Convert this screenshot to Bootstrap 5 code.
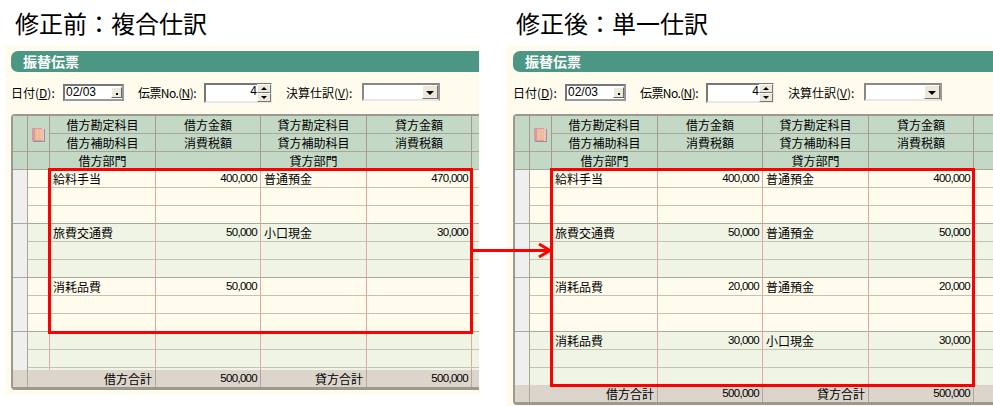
<!DOCTYPE html>
<html lang="ja">
<head>
<meta charset="utf-8">
<title>振替伝票</title>
<link href="https://cdn.jsdelivr.net/npm/bootstrap@5.3.0/dist/css/bootstrap.min.css" rel="stylesheet">
<style>
html,body{height:406px;overflow:hidden;background:#fff}
body{font-family:"Noto Sans CJK JP","Noto Sans",sans-serif;font-size:12px;color:#000;line-height:17px}
.stage{width:993px;height:406px}
.pane-a{width:501px;margin-left:5px}
.pane-b{width:487px}
.pane-title{height:45px;line-height:46px;font-size:24px;font-weight:400;margin:0;padding-left:10px}
.sheet{background:#fffcee;overflow:hidden;padding-top:6px}
.pane-a .sheet{width:474px;height:350px;padding-left:6px}
.pane-b .sheet{width:487px;height:361px;padding-left:7px}
.sheet-head{height:21px;width:600px;background:#4b9783;color:#fff;font-weight:700;font-size:14px;line-height:20px;padding-left:12px;border-radius:7px 0 0 7px}
.form-line{height:20px;margin-top:11px;width:470px;line-height:20px}
.f-label{width:52px}
.f-label2{width:58px;margin-left:14px;margin-right:8px;letter-spacing:-.6px}
.f-label3{width:68px;margin-left:14px;margin-right:8px}
.sunken{background:#fff;border:2px solid;font-family:"Liberation Sans",sans-serif;font-size:12px;line-height:12px}
.box-date{width:61px;height:17px;margin-top:1px;padding-left:1px;border-color:#777 #999 #999 #777;box-shadow:-1px -1px 0 #fbfaf6,3px 3px 0 #fbfaf6}
.box-num{width:68px;height:20px;padding-right:13px;text-align:right;border-color:#777 #e8e8e8 #e8e8e8 #777}
.box-combo{width:78px;height:18px;border-color:#888 #999 #e8e8e8 #888}
.pick-btn{width:11px;height:11px;background:#ece9d8;border:1px solid;border-color:#fff #666 #666 #fff;right:0;top:1px}
.pick-btn::after{content:"";position:absolute;left:4px;top:5px;width:2px;height:2px;background:#000}
.combo-btn{width:16px;height:14px;background:#ece9d8;border:1px solid;border-color:#fff #777 #777 #fff;right:0;top:0}
.combo-btn::after{content:"";position:absolute;left:3px;top:5px;border:4px solid transparent;border-top:4px solid #000;border-bottom:0}
.spin-top,.spin-bot{width:14px;height:9px;right:-1px;background:#ece9d8;border:1px solid;border-color:#fff #777 #777 #fff}
.spin-top{top:-1px}.spin-bot{top:8px}
.spin-top::after,.spin-bot::after{content:"";position:absolute;left:3px;top:2px;border:3px solid transparent}
.spin-top::after{border-bottom:3px solid #000;border-top:0}
.spin-bot::after{border-top:3px solid #000;border-bottom:0}
.frame{margin-top:11px;width:600px;border:solid #9c9a90;border-width:2px 0 3px 2px;border-radius:4px 0 0 4px}
.slip{table-layout:fixed;border-collapse:separate;border-spacing:0;width:598px}
.slip td{padding:0;height:18px;overflow:hidden;white-space:nowrap}
.slip-h td{background:#c3d9c6;border-right:1px solid #a9998c;border-bottom:1px solid #a9a598;text-align:center}
.slip-h svg{display:block;margin:3px 0 0 4px}
.slip-d td{border-right:1px solid #dcaaa0;border-bottom:1px solid #c6c2b2;padding:0 3px}
.slip-d.tone-a td{background:#fffcee}
.slip-d.tone-b td{background:#eff4e4}
.slip-d.row-end td{border-bottom-color:#a9a99a}
.slip-d td.rail{background:#efefef;border-right-color:#a9a598;border-bottom:1px solid #a9a99a;padding:0}
.slip-d td.rail-open{border-bottom:0}
.slip td.amt,.slip-t td.amt{text-align:right;font-family:"Liberation Sans",sans-serif;font-size:11.5px;letter-spacing:-.7px}
.slip-d.stub td{height:2px;line-height:0;font-size:0;border-bottom:0}
.slip-d.stub17 td{height:17px;border-bottom:0}
.slip-t td{background:#dbd5cb;height:17px;border-right:1px solid #b7a49a;text-align:right;padding:0 3px}
.frame-box{width:425px;border:3px solid #f00;left:48px;top:168px;height:166px}
.frame-box2{width:425px;border:3px solid #f00;left:550px;top:168px;height:219px}
.arrow-svg{left:472px;top:240px}
</style>
</head>
<body class="m-0">
<div class="stage d-flex position-relative">
  <section class="pane-a flex-shrink-0">
    <h1 class="pane-title">修正前：複合仕訳</h1>
    <div class="sheet">
      <div class="sheet-head">振替伝票</div>
      <div class="form-line d-flex align-items-start">
        <span class="f-label">日付(<u>D</u>):</span>
        <div class="sunken box-date position-relative">02/03<span class="pick-btn position-absolute"></span></div>
        <span class="f-label2">伝票No.(<u>N</u>):</span>
        <div class="sunken box-num position-relative">4<span class="spin-top position-absolute"></span><span class="spin-bot position-absolute"></span></div>
        <span class="f-label3">決算仕訳(<u>V</u>):</span>
        <div class="sunken box-combo position-relative"><span class="combo-btn position-absolute"></span></div>
      </div>
      <div class="frame">
        <table class="slip">
          <colgroup><col style="width:15px"><col style="width:22px"><col style="width:106px"><col style="width:105px"><col style="width:106px"><col style="width:105px"><col></colgroup>
          <tbody>
            <tr class="slip-h"><td rowspan="2"></td><td rowspan="2"><svg width="13" height="14" viewBox="0 0 13 14"><rect x="0" y="0" width="12" height="13" fill="#d79aa4"/><rect x="3" y="1" width="7" height="11" fill="#f0b8a0"/><path d="M5 3h1M8 3h1M5 6h1M8 6h1M5 9h1M8 9h1" stroke="#f5e070"/><path d="M11 0v13" stroke="#f6eeee"/><path d="M1 13.5h12M12.5 1v13" stroke="#a88a8c"/></svg></td><td>借方勘定科目</td><td>借方金額</td><td>貸方勘定科目</td><td>貸方金額</td><td></td></tr>
            <tr class="slip-h"><td>借方補助科目</td><td>消費税額</td><td>貸方補助科目</td><td>消費税額</td><td></td></tr>
            <tr class="slip-h"><td></td><td></td><td>借方部門</td><td></td><td>貸方部門</td><td></td><td></td></tr>
            <tr class="slip-d tone-a"><td class="rail" rowspan="3"></td><td></td><td>給料手当</td><td class="amt">400,000</td><td>普通預金</td><td class="amt">470,000</td><td></td></tr>
            <tr class="slip-d tone-a"><td></td><td></td><td></td><td></td><td></td><td></td></tr>
            <tr class="slip-d tone-a row-end"><td></td><td></td><td></td><td></td><td></td><td></td></tr>
            <tr class="slip-d tone-b"><td class="rail" rowspan="3"></td><td></td><td>旅費交通費</td><td class="amt">50,000</td><td>小口現金</td><td class="amt">30,000</td><td></td></tr>
            <tr class="slip-d tone-b"><td></td><td></td><td></td><td></td><td></td><td></td></tr>
            <tr class="slip-d tone-b row-end"><td></td><td></td><td></td><td></td><td></td><td></td></tr>
            <tr class="slip-d tone-a"><td class="rail" rowspan="3"></td><td></td><td>消耗品費</td><td class="amt">50,000</td><td></td><td></td><td></td></tr>
            <tr class="slip-d tone-a"><td></td><td></td><td></td><td></td><td></td><td></td></tr>
            <tr class="slip-d tone-a row-end"><td></td><td></td><td></td><td></td><td></td><td></td></tr>
            <tr class="slip-d tone-b"><td class="rail rail-open" rowspan="3"></td><td></td><td></td><td></td><td></td><td></td><td></td></tr>
            <tr class="slip-d tone-b"><td></td><td></td><td></td><td></td><td></td><td></td></tr>
            <tr class="slip-d tone-b stub"><td></td><td></td><td></td><td></td><td></td><td></td></tr>
            <tr class="slip-t"><td></td><td colspan="2">借方合計</td><td class="amt">500,000</td><td>貸方合計</td><td class="amt">500,000</td><td></td></tr>
          </tbody>
        </table>
      </div>
    </div>
  </section>
  <section class="pane-b flex-shrink-0">
    <h1 class="pane-title">修正後：単一仕訳</h1>
    <div class="sheet">
      <div class="sheet-head">振替伝票</div>
      <div class="form-line d-flex align-items-start">
        <span class="f-label">日付(<u>D</u>):</span>
        <div class="sunken box-date position-relative">02/03<span class="pick-btn position-absolute"></span></div>
        <span class="f-label2">伝票No.(<u>N</u>):</span>
        <div class="sunken box-num position-relative">4<span class="spin-top position-absolute"></span><span class="spin-bot position-absolute"></span></div>
        <span class="f-label3">決算仕訳(<u>V</u>):</span>
        <div class="sunken box-combo position-relative"><span class="combo-btn position-absolute"></span></div>
      </div>
      <div class="frame">
        <table class="slip">
          <colgroup><col style="width:15px"><col style="width:22px"><col style="width:106px"><col style="width:105px"><col style="width:106px"><col style="width:105px"><col></colgroup>
          <tbody>
            <tr class="slip-h"><td rowspan="2"></td><td rowspan="2"><svg width="13" height="14" viewBox="0 0 13 14"><rect x="0" y="0" width="12" height="13" fill="#d79aa4"/><rect x="3" y="1" width="7" height="11" fill="#f0b8a0"/><path d="M5 3h1M8 3h1M5 6h1M8 6h1M5 9h1M8 9h1" stroke="#f5e070"/><path d="M11 0v13" stroke="#f6eeee"/><path d="M1 13.5h12M12.5 1v13" stroke="#a88a8c"/></svg></td><td>借方勘定科目</td><td>借方金額</td><td>貸方勘定科目</td><td>貸方金額</td><td></td></tr>
            <tr class="slip-h"><td>借方補助科目</td><td>消費税額</td><td>貸方補助科目</td><td>消費税額</td><td></td></tr>
            <tr class="slip-h"><td></td><td></td><td>借方部門</td><td></td><td>貸方部門</td><td></td><td></td></tr>
            <tr class="slip-d tone-a"><td class="rail" rowspan="3"></td><td></td><td>給料手当</td><td class="amt">400,000</td><td>普通預金</td><td class="amt">400,000</td><td></td></tr>
            <tr class="slip-d tone-a"><td></td><td></td><td></td><td></td><td></td><td></td></tr>
            <tr class="slip-d tone-a row-end"><td></td><td></td><td></td><td></td><td></td><td></td></tr>
            <tr class="slip-d tone-b"><td class="rail" rowspan="3"></td><td></td><td>旅費交通費</td><td class="amt">50,000</td><td>普通預金</td><td class="amt">50,000</td><td></td></tr>
            <tr class="slip-d tone-b"><td></td><td></td><td></td><td></td><td></td><td></td></tr>
            <tr class="slip-d tone-b row-end"><td></td><td></td><td></td><td></td><td></td><td></td></tr>
            <tr class="slip-d tone-a"><td class="rail" rowspan="3"></td><td></td><td>消耗品費</td><td class="amt">20,000</td><td>普通預金</td><td class="amt">20,000</td><td></td></tr>
            <tr class="slip-d tone-a"><td></td><td></td><td></td><td></td><td></td><td></td></tr>
            <tr class="slip-d tone-a row-end"><td></td><td></td><td></td><td></td><td></td><td></td></tr>
            <tr class="slip-d tone-b"><td class="rail rail-open" rowspan="3"></td><td></td><td>消耗品費</td><td class="amt">30,000</td><td>小口現金</td><td class="amt">30,000</td><td></td></tr>
            <tr class="slip-d tone-b"><td></td><td></td><td></td><td></td><td></td><td></td></tr>
            <tr class="slip-d tone-b stub17"><td></td><td></td><td></td><td></td><td></td><td></td></tr>
            <tr class="slip-t"><td></td><td colspan="2">借方合計</td><td class="amt">500,000</td><td>貸方合計</td><td class="amt">500,000</td><td></td></tr>
          </tbody>
        </table>
      </div>
    </div>
  </section>
  <div class="frame-box position-absolute"></div>
  <div class="frame-box2 position-absolute"></div>
  <svg class="arrow-svg position-absolute" width="82" height="22" viewBox="0 0 82 22"><path d="M0 10.5H78" stroke="#f00" stroke-width="3" fill="none"/><path d="M67 4L78 10.5L67 17" stroke="#f00" stroke-width="3" fill="none"/></svg>
</div>
</body>
</html>
